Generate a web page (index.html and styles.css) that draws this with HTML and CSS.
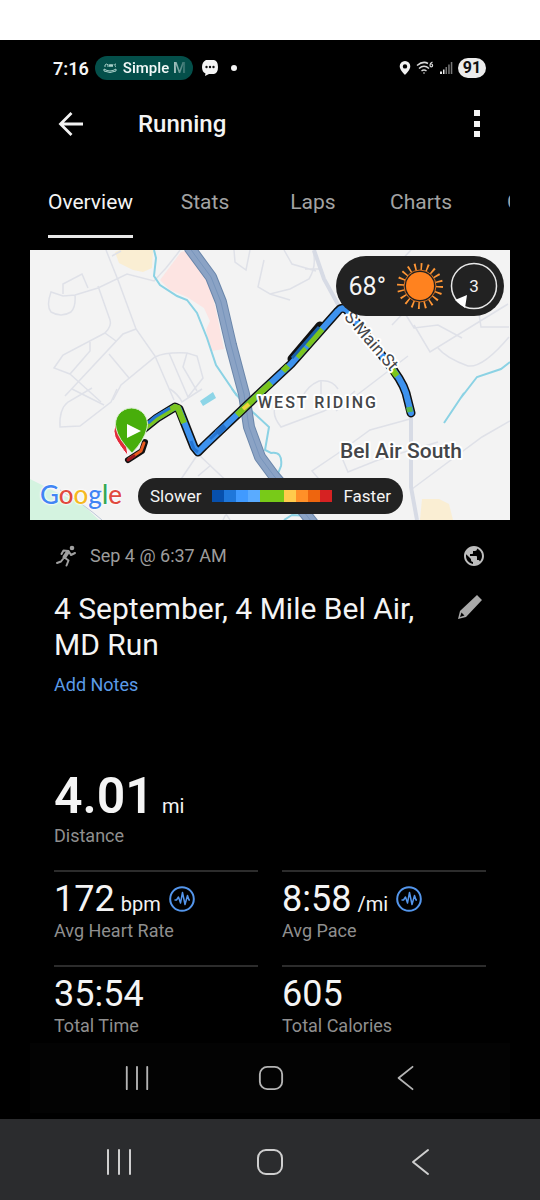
FILE: index.html
```html
<!DOCTYPE html>
<html lang="en">
<head>
<meta charset="utf-8">
<meta name="viewport" content="width=device-width, initial-scale=1">
<title>Running</title>
<link rel="stylesheet" href="styles.css">
</head>
<body>
<div class="page">
  <div class="phone">
    <div class="status">
      <span class="clock">7:16</span>
      <span class="chip">
        <svg class="chip-icon" viewBox="0 0 14 12" width="14" height="12" fill="none" stroke="#a9d0c9" stroke-width="1"><path d="M2 5V3Q4 1 5 3V5M6 2l1 3 1-3 1 3 1-3M13 2q-2 0-1 1.500t0 1.500M1 7q6 4 12 0v2q-6 3-12 0z"/></svg>
        <span class="chip-text">Simple M</span>
      </span>
      <svg viewBox="0 0 18 18" width="18" height="18"><path fill="#f4f4f4" d="M5 1h8q4 1 4 7t-4 7H8l-4 2 .500-2.500Q1 13 1 8t4-7z"/><g fill="#111"><circle cx="5.500" cy="8" r="1.200"/><circle cx="9" cy="8" r="1.200"/><circle cx="12.500" cy="8" r="1.200"/></g></svg>
      <span class="dot"></span>
      <span class="status-end">
        <svg viewBox="0 0 12 16" width="12" height="16"><path fill="#f2f2f2" fill-rule="evenodd" d="M6 1a5.300 5.300 0 0 0-5.300 5.300C.700 10 6 15 6 15s5.300-5 5.300-8.700A5.300 5.300 0 0 0 6 1zm0 3.200a2.200 2.200 0 1 1 0 4.400 2.200 2.200 0 0 1 0-4.400z"/></svg>
        <svg viewBox="0 0 18 14" width="18" height="14" fill="none" stroke="#d8d8d8" stroke-width="1.500"><path d="M1 4.500q6-5 11-2M3 7.500q5-4.500 10 0M5.500 10q2.500-2 5 0"/><circle cx="8" cy="12" r=".800" fill="#d8d8d8" stroke="none"/><path d="M16.500 1q-2.500 1-2.500 3.500a1.300 1.300 0 1 0 1.300-1.300" stroke-width="1.200"/></svg>
        <svg viewBox="0 0 14 14" width="14" height="14"><path fill="#e8e8e8" d="M1 10.500h2V13H1zM4 8.500h1.500V13H4z"/><path fill="#777" d="M6.500 6H8v7H6.500zM9.200 3.500h1.500V13H9.200zM11.800 1h1.500v12h-1.500z"/></svg>
        <span class="battery">91</span>
      </span>
    </div>

    <header class="appbar">
      <button class="icon-btn" aria-label="Back"><svg viewBox="0 0 26 26" width="26" height="26" fill="none" stroke="#f2f2f2" stroke-width="2.800"><path d="M25 13H3M13.500 2L2.500 13l11 11"/></svg></button>
      <h1 class="screen-title">Running</h1>
      <button class="icon-btn" aria-label="More options"><svg viewBox="0 0 8 28" width="8" height="28" fill="#f4f4f4"><path d="M0 0h6v6H0zM0 11h6v6H0zM0 21h6v6H0z"/></svg></button>
    </header>

    <nav class="tabs" role="tablist">
      <button class="tab tab-on" role="tab" aria-selected="true"><span class="tab-label">Overview</span></button>
      <button class="tab" role="tab"><span class="tab-label">Stats</span></button>
      <button class="tab" role="tab"><span class="tab-label">Laps</span></button>
      <button class="tab" role="tab"><span class="tab-label">Charts</span></button>
      <button class="tab" role="tab"><span class="tab-label">Gear</span></button>
    </nav>

    <section class="map" aria-label="Route map">
      <svg class="map-art" viewBox="0 0 480 270" preserveAspectRatio="xMidYMid slice">
        <rect width="480" height="270" fill="#f3f3f3"/>
        <path fill="#faeed3" d="M85 2l4 11 14 7 10 2 9-4 1-18H90z"/>
        <path fill="#fde4e2" d="M151 2l-21 28 10 10 17 7 17 11 6 13-4 9 5 21 13-2-8-39-6-26-20-34z"/>
        <path fill="#faeed3" d="M392 249h17l10 5 4 16h-33z"/>
        <path fill="#d4f3e0" d="M0 229l26 13 26 12 17 16H0z"/>
        <path fill="none" stroke="#bcc9d8" stroke-width="1" d="M30 240q25 15 42 30"/>
        <g fill="none" stroke="#dfe1e8" stroke-width="1.500">
          <path d="M76 0l12 30 18 49 19 27 19 44M82 6l9-5"/>
          <path d="M21 42q-5 14 0 20 10 6 20 0 5-5 4-17l-12 1zM33 44V34l19-10 6 14M45 45l23-7 29-14 27 7q14-14 26-31"/>
          <path d="M68 36l12 34q2 6-5 13l11 8M75 83l-42 22-9 13 16 6 20-23V92M106 79l-13 5-58 62M79 104l20 24M40 124l31 28M83 150l8-15 34-28q10-5 32-4l10 3 6 22-15 19-19-44M157 103l-4 14 14 24"/>
          <path d="M62 138L38 152q-9 7-8 25l20-1 31-24 6-13M42 139l32 16M140 139q8 5 12 13l20-13"/>
          <path d="M204 0l1 12 11 8 4-20M234 10l-6 27 12 7 20-5 19-10q8-13 4-28M254 0l8 14 24 7M275 19h14M240 44l20 6"/>
          <path d="M362 75l19-20q20-18 44-21M376 65l8 13 24-3 24 13M384 75l16 27 78-48M442 18l9 59h28M408 98q8 10 30 18 15 2 41-29M362 20l19-20M306 161l72-55"/>
          <path d="M272 148q5-12 17-17 13-2 19 8M291 130v19M245 157q-3 9 6 20l43-16q23-12 31-20M380 169l-40 11-33 24-25 17 17 20M310 203l8 19 30-12 60-18M382 239l70-52 28-16"/>
          <path d="M168 204l-27 40M168 204l37 35M168 226l13-11M200 270l-12-18M202 252l-9 18"/>
        </g>
        <path fill="none" stroke="#d7dbe5" stroke-width="4" d="M284 0l10 29 16 29M381 164v73l6 33"/>
        <g fill="none" stroke="#8bd2e4" stroke-width="2">
          <path d="M124 0l2 8-2 18 6 9 17 11 10 4 10 13 10 25 9 27 21 31"/>
          <path d="M202 139l12 15 25 23-4 23 6 3q12-2 10 13l-4 10M254 270l8-5 18 1M414 173l20-30M430 149l17-22 24-8 9-7"/>
        </g>
        <path fill="#8dd5e7" d="M170 151l13-9 3 6-13 8z"/>
        <path fill="none" stroke="#6a86aa" stroke-width="12" stroke-linejoin="round" d="M159-3l22 30 10 25 10 43 13 49 5 33 11 30 14 19 19 22 22 28"/>
        <path fill="none" stroke="#8ba3c5" stroke-width="10" stroke-linejoin="round" d="M159-3l22 30 10 25 10 43 13 49 5 33 11 30 14 19 19 22 22 28"/>
        <path fill="none" stroke="#7895bc" stroke-width="1" d="M159-3l22 30 10 25 10 43 13 49 5 33 11 30 14 19 19 22 22 28"/>

        <g fill="none" stroke-linejoin="round" stroke-linecap="round">
          <path stroke="#111" stroke-width="9" d="M112 180l15-12 18-11 4 2 15 38 4 5 6-6 57-54 30-28 31-35 16-18q4-5 9-1l40 52q15 18 19 31l5 20"/>
          <path stroke="#111" stroke-width="9" d="M262 109l28-33"/>
          <path stroke="#111" stroke-width="6" d="M98 210l14-9 3-9"/>
          <path stroke="#e85b20" stroke-width="3" d="M99 209l12-8 3-8"/>
          <path stroke="#9e1820" stroke-width="3" d="M98 210l6-4"/>
          <path stroke="#3d92ee" stroke-width="6" d="M112 180l15-12 18-11 4 2 15 38 4 5 6-6 57-54 30-28 31-35 16-18q4-5 9-1l40 52q15 18 19 31l5 20"/>
        </g>
        <g fill="none" stroke-width="6">
          <path stroke="#7bc51e" d="M112 180l15-12 18-11 3 1 6 15M207 165l24-23 10-9M253 121l5-5M267 107l8-9M277 96l15-17M359 115l8 11"/>
          <path stroke="#2474d2" stroke-width="3" d="M118 173l7-6 15-9M161 191l3 8 4 3M180 189l14-13"/>
          <path stroke="#2470ca" d="M187 183l8-7"/>
          <path stroke="#195fab" stroke-width="3" d="M262 108l27-31"/>
          <path stroke="#f0d33f" stroke-width="4" d="M213 159l6-5"/>
          <path stroke="#57b64d" d="M379 157l1 5"/>
        </g>
        <path fill="#e22b3b" stroke="#fff" stroke-width="1" d="M98 206q-9-11-13-19-4-12 7-21z"/>
        <path fill="#48ae0b" stroke="#d7edcd" stroke-width="1" d="M102 203q-14-14-16-25a16 16 0 1 1 31 0q-3 13-15 25z"/>
        <path fill="#fff" d="M97 174l14 7-14 7z"/>
        <g class="map-label">
          <text class="map-town" x="310" y="208">Bel Air South</text>
          <text class="map-area" x="228" y="158">WEST RIDING</text>
          <text class="map-road" text-anchor="middle" x="340" y="96" transform="rotate(49 340 92)">S Main St</text>
        </g>
      </svg>
      <div class="google"><span class="g-blue">G</span><span class="g-red">o</span><span class="g-yellow">o</span><span class="g-blue">g</span><span class="g-green">l</span><span class="g-red">e</span></div>
      <div class="weather">
        <span class="temp">68°</span>
        <svg viewBox="-24 -24 48 48" width="48" height="48">
          <circle r="14" fill="#ff821f"/><circle r="16" fill="none" stroke="#d96f1d" stroke-width="1"/>
          <circle r="19.500" fill="none" stroke="#ff9635" stroke-width="7" stroke-dasharray="1.700 4.426"/>
        </svg>
        <svg class="wind" viewBox="-24 -24 48 48" width="48" height="48"><circle r="22.500" fill="none" stroke="#e8e8e8" stroke-width="1.500"/><path fill="#fff" d="M-19 14l12-5-2 13z"/><text class="wind-num" text-anchor="middle" y="6">3</text></svg>
      </div>
      <div class="legend">
        <span>Slower</span>
        <span class="ramp"><i class="c1"></i><i class="c2"></i><i class="c3"></i><i class="c4"></i><i class="c5"></i><i class="c5"></i><i class="c6"></i><i class="c7"></i><i class="c8"></i><i class="c9"></i></span>
        <span>Faster</span>
      </div>
    </section>

    <main class="details">
      <div class="meta">
        <svg viewBox="0 0 24 24" width="24" height="24" fill="none" stroke="#a0a0a0" stroke-width="2" stroke-linecap="round" stroke-linejoin="round"><circle cx="18" cy="4" r="2.300" fill="#a0a0a0" stroke="none"/><path d="M7.500 10l2-3.500 5 .500 2.500 4 4-2"/><path stroke-width="4" d="M13.500 8.500l-3 4.500"/><path d="M10.500 13.500l4 3-2 5M9 15l-2 2.500-4 1.500"/></svg>
        <span>Sep 4 @ 6:37 AM</span>
        <svg class="globe" viewBox="0 0 24 24" width="24" height="24" fill="#bdbdbd"><path d="M12 2C6.480 2 2 6.480 2 12s4.480 10 10 10 10-4.480 10-10S17.520 2 12 2zm-1 17.930c-3.950-.490-7-3.850-7-7.930 0-.620.080-1.210.210-1.790L9 15v1c0 1.100.900 2 2 2v1.930zm6.900-2.540c-.260-.810-1-1.390-1.900-1.390h-1v-3c0-.550-.450-1-1-1H8v-2h2c.550 0 1-.450 1-1V7h2c1.100 0 2-.900 2-2v-.410c2.930 1.190 5 4.060 5 7.410 0 2.080-.800 3.970-2.100 5.390z"/></svg>
      </div>
      <div class="title-row">
        <h2 class="activity">4 September, 4 Mile Bel Air, MD Run</h2>
        <button class="icon-btn edit" aria-label="Edit title"><svg viewBox="0 0 26 26" width="26" height="26"><path fill="#aaa" fill-rule="evenodd" d="M20 1l5 5-16 17-8 2 2-8zM4.500 18.500L3 23l4.500-1.500z"/></svg></button>
      </div>
      <button class="notes">Add Notes</button>

      <div class="stat hero">
        <div class="value"><span class="num">4.01</span><span class="unit">mi</span></div>
        <div class="label">Distance</div>
      </div>
      <div class="grid">
        <div class="stat">
          <div class="value"><span class="num">172</span><span class="unit">bpm</span><svg class="pulse" viewBox="0 0 26 26" width="26" height="26"><circle cx="13" cy="13" r="11.800"/><path d="M5.500 14h2l2-3 2 6 2-10.500 2.500 12 2.500-9 1.500 4.500h1"/></svg></div>
          <div class="label">Avg Heart Rate</div>
        </div>
        <div class="stat">
          <div class="value"><span class="num">8:58</span><span class="unit">/mi</span><svg class="pulse" viewBox="0 0 26 26" width="26" height="26"><circle cx="13" cy="13" r="11.800"/><path d="M5.500 14h2l2-3 2 6 2-10.500 2.500 12 2.500-9 1.500 4.500h1"/></svg></div>
          <div class="label">Avg Pace</div>
        </div>
        <div class="stat">
          <div class="value"><span class="num">35:54</span></div>
          <div class="label">Total Time</div>
        </div>
        <div class="stat">
          <div class="value"><span class="num">605</span></div>
          <div class="label">Total Calories</div>
        </div>
      </div>
    </main>

    <nav class="sysnav sysnav-inner">
      <button class="icon-btn" aria-label="Recent apps"><svg viewBox="0 0 28 28" width="26" height="26"><path d="M3 2v24M14 2v24M25 2v24"/></svg></button>
      <button class="icon-btn" aria-label="Home"><svg viewBox="0 0 28 28" width="26" height="26"><rect x="2" y="2" width="24" height="24" rx="8"/></svg></button>
      <button class="icon-btn" aria-label="Back"><svg viewBox="0 0 28 28" width="26" height="26"><path d="M21 2L6 14l15 12"/></svg></button>
    </nav>
  </div>
  <nav class="sysnav sysnav-outer">
    <button class="icon-btn" aria-label="Recent apps"><svg viewBox="0 0 28 28" width="28" height="28"><path d="M3 2v24M14 2v24M25 2v24"/></svg></button>
    <button class="icon-btn" aria-label="Home"><svg viewBox="0 0 28 28" width="28" height="28"><rect x="2" y="2" width="24" height="24" rx="8"/></svg></button>
    <button class="icon-btn" aria-label="Back"><svg viewBox="0 0 28 28" width="28" height="28"><path d="M21 2L6 14l15 12"/></svg></button>
  </nav>
</div>
</body>
</html>
```
FILE: styles.css
```css
* { box-sizing: border-box; }
body { margin: 0; background: #fff; font-family: Roboto, "Noto Sans", sans-serif; color: #f4f4f4; }
button { background: none; border: 0; padding: 0; margin: 0; font: inherit; color: inherit; }
svg { display: block; flex: none; }
h1, h2 { margin: 0; }
.page { min-height: 100vh; padding-top: 40px; display: flex; flex-direction: column; }
.phone { background: #000; padding: 0 30px 6px; }
.icon-btn { display: flex; align-items: center; justify-content: center; }

.status { height: 56px; padding: 0 24px 0 23px; display: flex; align-items: center; font-size: 18px; font-weight: 600; }
.clock { margin-right: 6px; }
.chip { height: 24px; width: 98px; border-radius: 12px; background: #044f4a; display: flex; align-items: center; gap: 6px; padding: 0 8px; margin-right: 8px; font-size: 15px; overflow: hidden; }
.chip-text { white-space: nowrap; background: linear-gradient(90deg, #f2f8f7 70%, #044f4a 105%); -webkit-background-clip: text; background-clip: text; color: transparent; }
.dot { width: 6px; height: 6px; border-radius: 50%; background: #f4f4f4; margin-left: 12px; }
.status-end { margin-left: auto; display: flex; align-items: center; gap: 5px; }
.battery { background: #ececec; color: #111; border-radius: 10px; width: 28px; height: 20px; line-height: 20px; text-align: center; font-size: 16px; font-weight: 700; }

.appbar { height: 56px; padding: 0 28px; display: flex; align-items: center; }
.screen-title { flex: 1; margin-left: 54px; font-size: 24px; font-weight: 500; }

.tabs { height: 86px; margin-bottom: 12px; display: flex; overflow: hidden; font-size: 21px; color: #a3a3a3; }
.tab { flex: none; width: 108px; padding-top: 16px; display: flex; justify-content: center; }
.tab:first-child { width: 121px; }
.tab-label { height: 70px; line-height: 68px; }
.tab-on { color: #f4f4f4; }
.tab-on .tab-label { border-bottom: 3px solid #e8e8e8; }

.map { position: relative; aspect-ratio: 16 / 9; overflow: hidden; }
.map-art { width: 100%; height: 100%; }
.map-label { fill: #444649; stroke: #fff; stroke-width: 4px; stroke-linejoin: round; paint-order: stroke; }
.map-town { font-size: 21px; font-weight: 500; }
.map-area { font-size: 16px; font-weight: 500; letter-spacing: 2px; }
.map-road { font-size: 17px; }
.google { position: absolute; left: 10px; bottom: 9px; font: 500 26px/34px Lato, sans-serif; text-shadow: 0 0 2px #fff, 0 0 2px #fff, 0 0 3px #fff; }
.g-blue { color: #4285f4; }
.g-red { color: #e04a3f; }
.g-yellow { color: #f5b922; }
.g-green { color: #34a853; }
.weather { position: absolute; right: 6px; top: 6px; height: 60px; border-radius: 30px; background: #222; display: flex; align-items: center; padding: 0 6px 0 13px; }
.temp { font-size: 25px; margin-right: 10px; }
.wind { margin-left: 6px; }
.wind-num { font-size: 17px; fill: #f2f2f2; }
.legend { position: absolute; left: 108px; bottom: 6px; height: 36px; border-radius: 18px; background: #222; display: flex; align-items: center; gap: 11px; padding: 0 12px; font-size: 17px; }
.ramp { display: flex; height: 12px; }
.ramp i { width: 12px; }
.c1 { background: #0750ad; }
.c2 { background: #1f77da; }
.c3 { background: #409aff; }
.c4 { background: #5aabff; }
.c5 { background: #78ca18; }
.c6 { background: #ffcb4c; }
.c7 { background: #ff9028; }
.c8 { background: #ee650e; }
.c9 { background: #d62222; }

.details { padding: 22px 24px 0; }
.meta { height: 28px; display: flex; align-items: center; gap: 12px; font-size: 18px; line-height: 26px; color: #9c9c9c; }
.globe { margin-left: auto; }
.title-row { margin-top: 21px; display: flex; justify-content: space-between; align-items: flex-start; }
.activity { max-width: 380px; font-size: 30px; line-height: 36px; font-weight: 400; }
.edit { height: 32px; margin-right: 3px; }
.notes { display: block; margin-top: 8px; font-size: 18px; line-height: 28px; color: #5b9be8; }
.value { display: flex; align-items: baseline; gap: 6px; }
.num { font-size: 36px; line-height: 40px; }
.unit { font-size: 20px; line-height: 24px; }
.label { font-size: 18px; line-height: 24px; color: #8f8f8f; }
.hero { margin-top: 69px; margin-bottom: 22px; }
.hero .value { gap: 8px; }
.hero .num { font-size: 50px; line-height: 56px; font-weight: 600; }
.grid { display: grid; grid-template-columns: 1fr 1fr; column-gap: 24px; row-gap: 22px; }
.grid .stat { border-top: 2px solid #2c2c2c; padding-top: 7px; }
.pulse { align-self: center; margin-left: 2px; fill: none; stroke: #5496ec; stroke-width: 2px; stroke-linejoin: round; }
.pulse path { stroke-width: 1.5px; }

.sysnav { display: grid; grid-template-columns: repeat(3, 1fr); }
.sysnav svg { fill: none; stroke: #b4b4b4; stroke-width: 2px; stroke-linejoin: round; stroke-linecap: round; }
.sysnav-inner { height: 70px; margin-top: 5px; padding: 0 37px 0 40px; background: #030303; }
.sysnav-outer { flex: 1; min-height: 80px; padding: 4px 43px 0; background: #2b2c2e; }
.sysnav-outer svg { stroke: #cfcfcf; }
```
